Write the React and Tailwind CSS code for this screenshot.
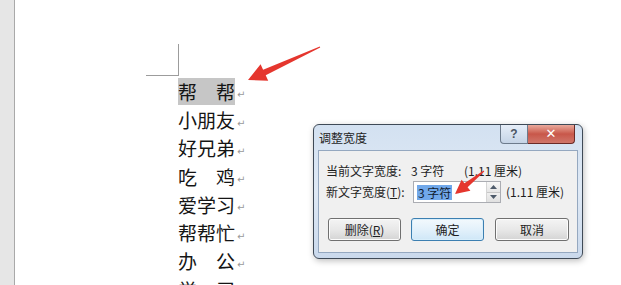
import React from "react";

const CJK = { fontFamily: '"Noto Sans CJK SC", "Noto Sans", sans-serif' };

function Mark() {
  return <span className="ml-[2px] text-[10px] leading-none text-[#9a9a9a] self-end mb-[5px]" style={{ fontFamily: '"DejaVu Sans", sans-serif' }}>↵</span>;
}

function Row({ chars, spread, highlight }) {
  const inner = spread ? (
    <span className={`flex w-[57px] h-[27px] items-center justify-between ${highlight ? "bg-[#c6c6c6]" : ""}`}>
      <span>{chars[0]}</span>
      <span>{chars[1]}</span>
    </span>
  ) : (
    <span className="flex w-[57px] h-[27px] items-center">{chars}</span>
  );
  return (
    <div className="flex h-[28.3px] shrink-0 items-center">
      {inner}
      <Mark />
    </div>
  );
}

function Button({ children, focused }) {
  return (
    <div
      className={`flex h-[23px] items-center justify-center rounded-[3px] border text-[12px] ${
        focused
          ? "border-[#3c7fb1] bg-gradient-to-b from-[#f3f9fd] via-[#e3f1fb] to-[#cfe7f7] shadow-[inset_0_0_0_1px_#d8eefb]"
          : "border-[#707070] bg-gradient-to-b from-[#f4f4f4] via-[#e8e8e8] to-[#d4d4d4] shadow-[inset_0_0_0_1px_#fcfcfc]"
      }`}
    >
      {children}
    </div>
  );
}

function Dialog() {
  return (
    <div
      className="absolute left-[313px] top-[124px] flex h-[135px] w-[270px] flex-col rounded-[6px] border border-[#3f4a57] bg-gradient-to-b from-[#d3e1f1] via-[#dfe9f5] to-[#cad9ec] shadow-[1px_2px_6px_rgba(0,0,0,0.25)] text-[#1e1e1e]"
      style={CJK}
    >
      <div className="absolute right-[7px] top-0 flex h-[19px]">
        <div className="flex w-[28px] items-center justify-center rounded-bl-[4px] border border-t-0 border-[#6d7b8c] bg-gradient-to-b from-[#e6eef8] to-[#c5d4e6] text-[12px] font-bold text-[#4b5563]" style={{ fontFamily: '"Liberation Sans", sans-serif' }}>
          ?
        </div>
        <div className="flex w-[47px] items-center justify-center rounded-br-[4px] border border-l-0 border-t-0 border-[#6a2a26] bg-gradient-to-b from-[#e9a99c] via-[#c8574a] to-[#d0766a] text-[13px] font-bold text-white" style={{ fontFamily: '"DejaVu Sans", sans-serif' }}>
          ✕
        </div>
      </div>
      <div className="flex h-[25px] shrink-0 items-center pl-[5px] pt-[1px] text-[12px]">调整宽度</div>
      <div className="mx-[4px] mb-[5px] flex flex-1 flex-col border border-[#95a8c0] bg-[#f0f0f0] pl-[7px] pt-[12px] text-[12px]">
        <div className="flex h-[16px] shrink-0 items-center">
          <span className="w-[85px]">当前文字宽度:</span>
          <span className="w-[53px]">3 字符</span>
          <span>(1.11 厘米)</span>
        </div>
        <div className="mt-[2px] flex h-[22px] shrink-0 items-center">
          <span className="w-[87px]">
            新文字宽度(<span className="underline">T</span>):
          </span>
          <div className="flex h-[22px] w-[88px] border border-[#abadb3] bg-white">
            <div className="flex flex-1 items-center pl-[3px]">
              <span className="bg-[#71a8ea] px-[1px] leading-[15px] text-[#101c30]">3 字符</span>
            </div>
            <div className="flex w-[14px] flex-col border-l border-[#d5d5d5]">
              <div className="flex flex-1 items-center justify-center border-b border-[#c8c8c8] bg-gradient-to-b from-[#f7f7f7] to-[#e6e6e6]">
                <svg width="7" height="4" viewBox="0 0 7 4"><path d="M0 4 L3.5 0 L7 4Z" fill="#4d5a6a" /></svg>
              </div>
              <div className="flex flex-1 items-center justify-center bg-gradient-to-b from-[#f0f0f0] to-[#e0e0e0]">
                <svg width="7" height="4" viewBox="0 0 7 4"><path d="M0 0 L3.5 4 L7 0Z" fill="#4d5a6a" /></svg>
              </div>
            </div>
          </div>
          <span className="ml-[5px]">(1.11 厘米)</span>
        </div>
        <div className="ml-[2px] mt-[15px] flex shrink-0">
          <div className="w-[73px]">
            <Button>
              删除(<span className="underline">R</span>)
            </Button>
          </div>
          <div className="ml-[10px] w-[73px]">
            <Button focused>确定</Button>
          </div>
          <div className="ml-[11px] w-[74px]">
            <Button>取消</Button>
          </div>
        </div>
      </div>
    </div>
  );
}

export default function App() {
  return (
    <div className="relative flex h-[285px] w-[621px] overflow-hidden bg-white">
      <div className="h-full w-[15px] shrink-0 border-r border-[#a9a9a9] bg-[#e6e6e6]" />
      <div className="flex flex-col pl-[131px] pt-[44px] text-[19px] leading-none text-[#151515]" style={CJK}>
        <div className="h-[32px] w-[33px] shrink-0 border-b border-r border-[#9c9c9c]" />
        <div className="ml-[32px] mt-[1px] flex shrink-0 flex-col">
          <Row chars="帮帮" spread highlight />
          <Row chars="小朋友" />
          <Row chars="好兄弟" />
          <Row chars="吃鸡" spread />
          <Row chars="爱学习" />
          <Row chars="帮帮忙" />
          <Row chars="办公" spread />
          <Row chars="学习" spread />
        </div>
      </div>
      <Dialog />
      <svg className="pointer-events-none absolute left-0 top-0" width="621" height="285" viewBox="0 0 621 285">
        <polygon
          points="248,80 268.2,80.7 265.7,75.2 320.2,47.5 319.8,46.5 263.1,69.8 260.6,64.3"
          fill="#e5362e"
        />
        <polygon
          points="455,194 470.4,190.8 467.6,187.3 484.3,171.4 483.7,170.6 464.4,183.3 461.6,179.8"
          fill="#e5362e"
        />
      </svg>
    </div>
  );
}
